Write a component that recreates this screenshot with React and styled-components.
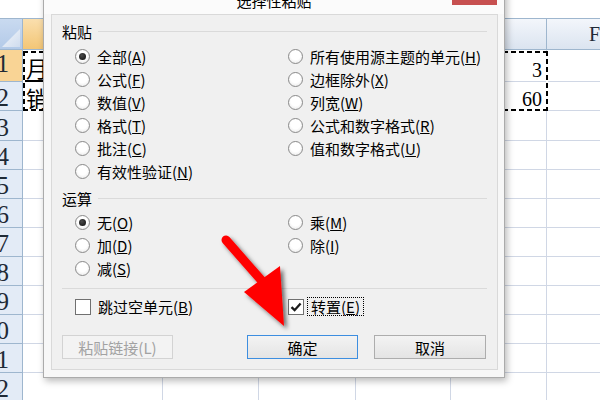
import React from 'react';
import styled, { createGlobalStyle } from 'styled-components';

const GlobalStyle = createGlobalStyle`
  html, body {
    margin: 0;
    padding: 0;
    background: #fff;
  }
  body {
    font-family: "Noto Sans CJK SC", "Noto Sans", sans-serif;
  }
`;

const COLS = [
  { key: 'A', width: 140 },
  { key: 'B', width: 96 },
  { key: 'C', width: 97 },
  { key: 'D', width: 95 },
  { key: 'E', width: 96 },
  { key: 'F', width: 96 },
];

const ROW_HEIGHTS = [32, 29, 30, 29, 29, 29, 29, 29, 29, 29, 29, 29];

const CELLS = {
  A1: { text: '月', kind: 'cjk' },
  A2: { text: '销', kind: 'cjk' },
  E1: { text: '3', kind: 'num' },
  E2: { text: '60', kind: 'num' },
};

const PASTE_LEFT = [
  { label: '全部', hotkey: 'A', checked: true },
  { label: '公式', hotkey: 'F' },
  { label: '数值', hotkey: 'V' },
  { label: '格式', hotkey: 'T' },
  { label: '批注', hotkey: 'C' },
  { label: '有效性验证', hotkey: 'N' },
];

const PASTE_RIGHT = [
  { label: '所有使用源主题的单元', hotkey: 'H' },
  { label: '边框除外', hotkey: 'X' },
  { label: '列宽', hotkey: 'W' },
  { label: '公式和数字格式', hotkey: 'R' },
  { label: '值和数字格式', hotkey: 'U' },
];

const OP_LEFT = [
  { label: '无', hotkey: 'O', checked: true },
  { label: '加', hotkey: 'D' },
  { label: '减', hotkey: 'S' },
];

const OP_RIGHT = [
  { label: '乘', hotkey: 'M' },
  { label: '除', hotkey: 'I' },
];

const Screen = styled.div`
  position: relative;
  width: 600px;
  height: 400px;
  overflow: hidden;
  background: #fff;
`;

const TopStrip = styled.div`
  height: 18px;
  background: #fff;
`;

const Sheet = styled.div`
  position: relative;
  display: grid;
  grid-template-columns: 23px ${COLS.map((c) => `${c.width}px`).join(' ')};
  grid-template-rows: 32px ${ROW_HEIGHTS.map((h) => `${h}px`).join(' ')};
  width: max-content;
`;

const Corner = styled.div`
  position: relative;
  box-sizing: border-box;
  border-top: 1px solid #9eb6ce;
  border-right: 1px solid #9eb6ce;
  border-bottom: 1px solid #9eb6ce;
  background: linear-gradient(#c9daf0, #b3cae8);

  &::after {
    content: '';
    position: absolute;
    right: 2px;
    bottom: 2px;
    width: 18px;
    height: 18px;
    background: linear-gradient(135deg, #f4f7fb, #cfdcee);
    clip-path: polygon(100% 0, 100% 100%, 0 100%);
  }
`;

const ColHead = styled.div`
  box-sizing: border-box;
  border-top: 1px solid #9eb6ce;
  border-right: 1px solid #9eb6ce;
  border-bottom: 1px solid #9eb6ce;
  background: ${(p) =>
    p.$active
      ? 'linear-gradient(#fadfae, #f3c676)'
      : 'linear-gradient(#f3f6fb, #dbe4f0)'};
  display: flex;
  align-items: center;
  justify-content: center;
  font: 20px "Liberation Serif", serif;
  color: #1f2a36;
`;

const RowHead = styled.div`
  box-sizing: border-box;
  border-right: 1px solid #9eb6ce;
  border-bottom: 1px solid #9eb6ce;
  background: ${(p) => (p.$active ? '#f9d495' : '#e3ebf6')};
  display: flex;
  align-items: center;
  justify-content: flex-end;
  padding: ${(p) => (p.$active ? '0 13px 5px 0' : '3px 13px 0 0')};
  overflow: hidden;
  font: 25px "Liberation Serif", serif;
  line-height: 1;
  color: #1f2a36;
`;

const Cell = styled.div`
  box-sizing: border-box;
  border-right: 1px solid #d0d7e5;
  border-bottom: ${(p) => (p.$cursor ? '2px solid #000' : '1px solid #d0d7e5')};
  display: flex;
  align-items: flex-end;
  justify-content: ${(p) => (p.$kind === 'num' ? 'flex-end' : 'flex-start')};
  padding: ${(p) => (p.$kind === 'num' ? '0 4px 1px 0' : '0 0 2px 3px')};
  overflow: hidden;
  white-space: nowrap;
  line-height: 1;
  font-size: ${(p) => (p.$kind === 'num' ? '20px' : '22px')};
  font-family: ${(p) =>
    p.$kind === 'num'
      ? '"Liberation Serif", serif'
      : '"Noto Sans CJK SC", sans-serif'};
  color: #000;
`;

const dash = 'repeating-linear-gradient(90deg, #000 0 5px, #fff 5px 8px)';
const dashV = 'repeating-linear-gradient(180deg, #000 0 5px, #fff 5px 8px)';

const CopyMarquee = styled.div`
  position: absolute;
  left: 23px;
  top: 33px;
  width: 525px;
  height: 60px;
  background:
    ${dash} top left / 100% 2px no-repeat,
    ${dash} bottom left / 100% 2px no-repeat,
    ${dashV} top left / 2px 100% no-repeat,
    ${dashV} top right / 2px 100% no-repeat;
  pointer-events: none;
`;

const Window = styled.div`
  position: absolute;
  left: 43px;
  top: -15px;
  width: 462px;
  height: 393px;
  box-sizing: border-box;
  display: flex;
  flex-direction: column;
  padding: 0 6px 7px 7px;
  background: #f7f7f7;
  border: 1px solid #ababab;
  box-shadow: 2px 3px 7px rgba(0, 0, 0, 0.28);
`;

const TitleBar = styled.div`
  height: 28px;
  display: flex;
  align-items: center;
  justify-content: center;
  font-size: 15px;
  color: #000;
  background: #fbfbfb;
  margin: 0 -6px 0 -7px;
`;

const CloseButton = styled.div`
  position: absolute;
  top: 0;
  right: 7px;
  width: 45px;
  height: 19px;
  background: #c75050;
`;

const Panel = styled.div`
  flex: 1;
  display: flex;
  flex-direction: column;
  padding: 0 10px;
  background: #f0f0f0;
  border: 1px solid #d9d9d9;
  font-size: 15px;
  color: #000;
`;

const GroupHeader = styled.div`
  display: flex;
  align-items: center;
  gap: 6px;
  height: 22px;
  margin-top: ${(p) => p.$gap}px;

  &::after {
    content: '';
    flex: 1;
    height: 1px;
    background: #dadada;
  }
`;

const OptionGrid = styled.div`
  display: grid;
  grid-template-columns: 213px 1fr;
  padding-left: 13px;
  margin-top: ${(p) => p.$gap}px;
`;

const OptionColumn = styled.div`
  display: flex;
  flex-direction: column;
`;

const OptionRow = styled.div`
  display: flex;
  align-items: center;
  gap: 7px;
  height: 23px;
  white-space: nowrap;
`;

const Radio = styled.span`
  flex: none;
  box-sizing: border-box;
  width: 15px;
  height: 15px;
  border-radius: 50%;
  border: 1px solid #8a8a8a;
  background: radial-gradient(circle at 50% 40%, #fff 45%, #e2e2e2 100%);
  display: flex;
  align-items: center;
  justify-content: center;

  &::after {
    content: '';
    display: ${(p) => (p.$checked ? 'block' : 'none')};
    width: 7px;
    height: 7px;
    border-radius: 50%;
    background: radial-gradient(circle at 40% 35%, #4a4a4a, #0d0d0d);
  }
`;

const Divider = styled.div`
  height: 1px;
  background: #dadada;
  margin-top: 8px;
`;

const CheckGrid = styled(OptionGrid)`
  height: 23px;
`;

const CheckItem = styled.div`
  display: flex;
  align-items: center;
  gap: 3px;
  white-space: nowrap;
`;

const Box = styled.span`
  flex: none;
  box-sizing: border-box;
  width: 16px;
  height: 16px;
  border: 1px solid #707070;
  background: #fff;
  display: flex;
  align-items: center;
  justify-content: center;
`;

const CheckLabel = styled.span`
  padding: 1px 3px;
  border: 1px dotted ${(p) => (p.$focused ? '#000' : 'transparent')};
  line-height: 1.05;
`;

const ButtonRow = styled.div`
  display: flex;
  margin-top: 17px;
`;

const ButtonGroup = styled.div`
  display: flex;
  gap: 16px;
  margin-left: auto;
  margin-right: 1px;
`;

const Button = styled.button`
  box-sizing: border-box;
  width: ${(p) => p.$width}px;
  height: 24px;
  padding: 0;
  font-family: "Noto Sans CJK SC", sans-serif;
  font-size: 15px;
  line-height: 1;
  color: ${(p) => (p.disabled ? '#a2a2a2' : '#000')};
  border: 1px solid
    ${(p) => (p.$primary ? '#3d8ee0' : p.disabled ? '#d3d3d3' : '#adadad')};
  background: ${(p) =>
    p.disabled ? '#f3f3f3' : 'linear-gradient(#f3f3f3, #e4e4e4)'};
`;

const ArrowSvg = styled.svg`
  position: absolute;
  left: 200px;
  top: 220px;
  width: 110px;
  height: 120px;
  overflow: visible;
  pointer-events: none;
`;

function Option({ label, hotkey, checked }) {
  return (
    <OptionRow>
      <Radio $checked={checked} />
      <span>
        {label}(<u>{hotkey}</u>)
      </span>
    </OptionRow>
  );
}

function CheckOption({ label, hotkey, checked }) {
  return (
    <CheckItem>
      <Box>
        {checked && (
          <svg width="12" height="12" viewBox="0 0 12 12">
            <path
              d="M1.5 6.2 L4.6 9.2 L10.6 2.6"
              fill="none"
              stroke="#1b1b1b"
              strokeWidth="2.3"
            />
          </svg>
        )}
      </Box>
      <CheckLabel $focused={checked}>
        {label}(<u>{hotkey}</u>)
      </CheckLabel>
    </CheckItem>
  );
}

function Spreadsheet() {
  return (
    <Sheet>
      <Corner />
      {COLS.map((c) => (
        <ColHead key={c.key} $active={c.key === 'A'}>
          {c.key}
        </ColHead>
      ))}
      {ROW_HEIGHTS.map((_, i) => {
        const row = i + 1;
        return (
          <React.Fragment key={row}>
            <RowHead $active={row === 1}>{row}</RowHead>
            {COLS.map((c) => {
              const data = CELLS[`${c.key}${row}`];
              return (
                <Cell
                  key={c.key}
                  $kind={data ? data.kind : 'cjk'}
                  $cursor={c.key === 'A' && row === 1}
                >
                  {data ? data.text : ''}
                </Cell>
              );
            })}
          </React.Fragment>
        );
      })}
      <CopyMarquee />
    </Sheet>
  );
}

function PasteSpecialDialog() {
  return (
    <Window>
      <TitleBar>选择性粘贴</TitleBar>
      <CloseButton />
      <Panel>
        <GroupHeader $gap={5}>粘贴</GroupHeader>
        <OptionGrid $gap={3}>
          <OptionColumn>
            {PASTE_LEFT.map((o) => (
              <Option key={o.hotkey} {...o} />
            ))}
          </OptionColumn>
          <OptionColumn>
            {PASTE_RIGHT.map((o) => (
              <Option key={o.hotkey} {...o} />
            ))}
          </OptionColumn>
        </OptionGrid>

        <GroupHeader $gap={4}>运算</GroupHeader>
        <OptionGrid $gap={2}>
          <OptionColumn>
            {OP_LEFT.map((o) => (
              <Option key={o.hotkey} {...o} />
            ))}
          </OptionColumn>
          <OptionColumn>
            {OP_RIGHT.map((o) => (
              <Option key={o.hotkey} {...o} />
            ))}
          </OptionColumn>
        </OptionGrid>

        <Divider />

        <CheckGrid $gap={6}>
          <CheckOption label="跳过空单元" hotkey="B" />
          <CheckOption label="转置" hotkey="E" checked />
        </CheckGrid>

        <ButtonRow>
          <Button $width={111} disabled>
            粘贴链接(L)
          </Button>
          <ButtonGroup>
            <Button $width={111} $primary>
              确定
            </Button>
            <Button $width={112}>取消</Button>
          </ButtonGroup>
        </ButtonRow>
      </Panel>
    </Window>
  );
}

function RedArrow() {
  return (
    <ArrowSvg viewBox="0 0 110 120">
      <defs>
        <filter id="arrowShadow" x="-30%" y="-30%" width="160%" height="160%">
          <feDropShadow dx="3" dy="3" stdDeviation="2" floodColor="#000" floodOpacity="0.55" />
        </filter>
      </defs>
      <g filter="url(#arrowShadow)">
        <line x1="26" y1="20" x2="62" y2="61" stroke="#ff0000" strokeWidth="9" strokeLinecap="round" />
        <polygon points="44,72 80,46 84,106" fill="#ff0000" />
      </g>
    </ArrowSvg>
  );
}

export default function App() {
  return (
    <Screen>
      <GlobalStyle />
      <TopStrip />
      <Spreadsheet />
      <PasteSpecialDialog />
      <RedArrow />
    </Screen>
  );
}
